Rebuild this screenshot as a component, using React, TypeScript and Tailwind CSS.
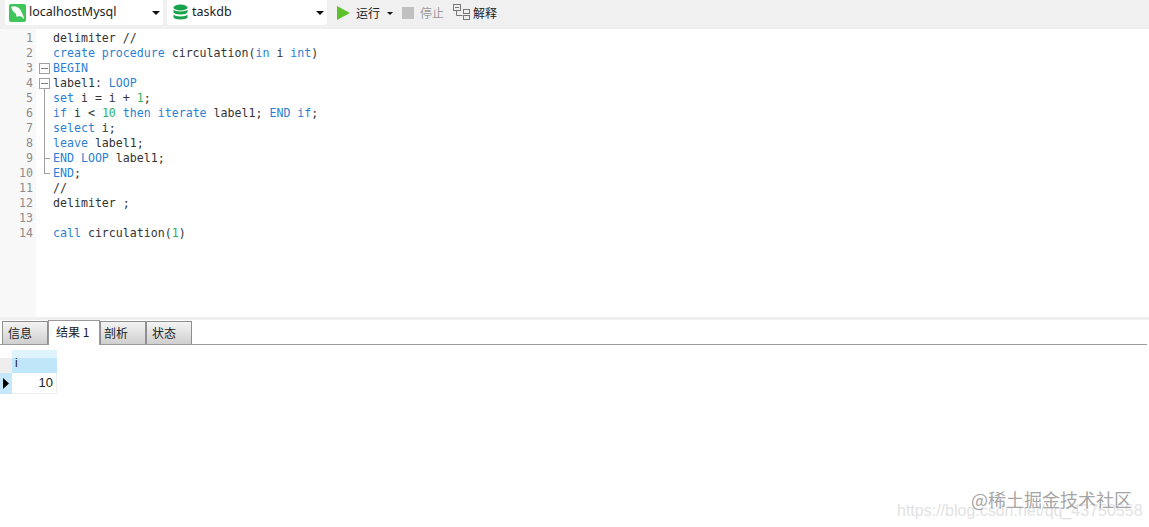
import React from 'react';

const mono = { fontFamily: '"DejaVu Sans Mono", monospace' };

type Tok = [string, 'k' | 'n' | 'p'];

const lines: Tok[][] = [
  [['delimiter //', 'p']],
  [['create procedure', 'k'], [' circulation(', 'p'], ['in', 'k'], [' i ', 'p'], ['int', 'k'], [')', 'p']],
  [['BEGIN', 'k']],
  [['label1: ', 'p'], ['LOOP', 'k']],
  [['set', 'k'], [' i = i + ', 'p'], ['1', 'n'], [';', 'p']],
  [['if', 'k'], [' i < ', 'p'], ['10', 'n'], [' ', 'p'], ['then iterate', 'k'], [' label1; ', 'p'], ['END if', 'k'], [';', 'p']],
  [['select', 'k'], [' i;', 'p']],
  [['leave', 'k'], [' label1;', 'p']],
  [['END LOOP', 'k'], [' label1;', 'p']],
  [['END', 'k'], [';', 'p']],
  [['//', 'p']],
  [['delimiter ;', 'p']],
  [],
  [['call', 'k'], [' circulation(', 'p'], ['1', 'n'], [')', 'p']],
];

const tokClass = { k: 'text-[#2b7fd4]', n: 'text-[#2fae5f]', p: 'text-[#333333]' };

function FoldMark({ line }: { line: number }) {
  if (line === 3 || line === 4) {
    return (
      <div className="relative w-[11px] h-[15px]">
        {line === 4 && <div className="absolute left-[5px] top-[12px] h-[3px] w-px bg-[#a0a0a0]" />}
        <div className="absolute left-0 top-[2px] w-[11px] h-[11px] border border-[#a0a0a0] bg-white flex items-center justify-center">
          <div className="w-[7px] h-px bg-[#808080]" />
        </div>
      </div>
    );
  }
  if (line >= 5 && line <= 10) {
    return (
      <div className="relative w-[11px] h-[15px]">
        <div className={`absolute left-[5px] top-0 w-px bg-[#a0a0a0] ${line === 10 ? 'h-[8px]' : 'h-[15px]'}`} />
        {line >= 9 && <div className="absolute left-[5px] top-[7px] w-[6px] h-px bg-[#a0a0a0]" />}
      </div>
    );
  }
  return null;
}

function Combo({ box, icon, label }: { box: string; icon: React.ReactNode; label: string }) {
  return (
    <div className={`${box} h-[25px] bg-white flex items-center pr-[3px] rounded-[2px]`}>
      <div className="w-[20px] h-[18px] flex items-center justify-center shrink-0">{icon}</div>
      <span className="ml-[2px] text-[12.5px] text-[#222222]" style={{ fontFamily: '"Noto Sans", sans-serif' }}>{label}</span>
      <svg className="ml-auto" width="8" height="4" viewBox="0 0 8 4"><path d="M0 0h8L4 4z" fill="#111" /></svg>
    </div>
  );
}

function Tab({ label, active, box }: { label: string; active?: boolean; box: string }) {
  if (active) {
    return (
      <div className={`${box} h-[25px] -mb-px relative z-10 bg-white border border-b-0 border-[#9a9a9a] flex items-center text-[12px] text-[#222222] pb-[3px]`}>
        {label}
      </div>
    );
  }
  return (
    <div className={`${box} h-[23px] bg-gradient-to-b from-[#f4f4f4] to-[#cfcfcf] border border-b-0 border-[#8f8f8f] flex items-center text-[12px] text-[#222222]`}>
      {label}
    </div>
  );
}

export default function App() {
  return (
    <div
      className="relative w-[1149px] h-[527px] overflow-hidden bg-white flex flex-col"
      style={{ fontFamily: '"Noto Sans CJK SC", "Noto Sans", sans-serif' }}
    >
      {/* Toolbar */}
      <div className="h-[29px] bg-[#f0f0f0] flex items-start pl-[5px] shrink-0">
        <Combo
          box="w-[158px] pl-[2px]"
          label="localhostMysql"
          icon={
            <svg width="17" height="18" viewBox="0 0 17 18">
              <rect width="17" height="18" rx="2" fill="#3fc65a" />
              <path d="M2 3c2-1 4-1 6 0 3 1 4 4 5 6 1 2 2 4 2 6-2-2-3-3-5-3-1 1-2 1-3 0 1-1 0-2-1-3-2-1-3-4-4-6z" fill="#fff" />
            </svg>
          }
        />
        <div className="ml-[4px]">
          <Combo
            box="w-[160px] pl-[3px]"
            label="taskdb"
            icon={
              <svg width="15" height="17" viewBox="0 0 15 17">
                <ellipse cx="7.5" cy="3.5" rx="7" ry="3" fill="#16a34a" />
                <path d="M0.5 5.5c1 2.500 13 2.500 14 0v3c-1 2.500-13 2.500-14 0z" fill="#16a34a" />
                <path d="M0.500 10.500c1 2.500 13 2.500 14 0v3c-1 2.500-13 2.500-14 0z" fill="#16a34a" />
              </svg>
            }
          />
        </div>
        <div className="flex items-center h-[26px] ml-[10px] text-[12px] text-[#222222]">
          <svg width="13" height="14" viewBox="0 0 13 14"><path d="M0 0l13 7-13 7z" fill="#5cc22c" /></svg>
          <span className="ml-[6px]">运行</span>
          <svg className="ml-[7px]" width="6" height="3" viewBox="0 0 6 3"><path d="M0 0h6L3 3z" fill="#111" /></svg>
          <div className="ml-[9px] w-[12px] h-[12px] bg-[#c0c0c0]" />
          <span className="ml-[6px] text-[#9a9a9a]">停止</span>
          <svg className="ml-[9px] mb-[3px]" width="17" height="16" viewBox="0 0 17 16" fill="none" stroke="#777" strokeWidth="1">
            <rect x="0.500" y="0.500" width="7" height="6" />
            <path d="M2 3.500h4" />
            <path d="M3.500 6.500v5h6" />
            <rect x="10.500" y="5.500" width="6" height="4" />
            <rect x="10.500" y="11.500" width="6" height="4" />
          </svg>
          <span className="ml-[3px]">解释</span>
        </div>
      </div>

      {/* Editor */}
      <div className="h-[288px] flex shrink-0 bg-white">
        <div className="w-[36px] bg-[#f8f8f8] pt-[2px] shrink-0">
          {lines.map((_, i) => (
            <div
              key={i}
              className="h-[15px] leading-[15px] text-right pr-[3px] text-[11.6px] text-[#8c8c8c]"
              style={mono}
            >
              {i + 1}
            </div>
          ))}
        </div>
        <div className="pt-[2px] pl-[3px] flex-1">
          {lines.map((toks, i) => (
            <div key={i} className="h-[15px] flex">
              <div className="w-[14px] shrink-0"><FoldMark line={i + 1} /></div>
              <pre className="leading-[15px] text-[11.6px]" style={mono}>
                {toks.map(([t, c], j) => (
                  <span key={j} className={tokClass[c]}>{t}</span>
                ))}
              </pre>
            </div>
          ))}
        </div>
      </div>

      {/* Splitter */}
      <div className="h-[3px] bg-[#f0f0f0] shrink-0" />

      {/* Result tabs */}
      <div className="h-[24px] mt-[1px] flex items-end pl-[2px] border-b border-[#9a9a9a] mr-[2px] shrink-0">
        <Tab label="信息" box="w-[46px] pl-[5px]" />
        <Tab label="结果 1" active box="w-[52px] pl-[7px]" />
        <Tab label="剖析" box="w-[46px] pl-[3px]" />
        <Tab label="状态" box="w-[46px] pl-[5px]" />
      </div>

      {/* Result grid */}
      <div className="mt-[5px] text-[12px] text-[#222222]" style={{ fontFamily: '"Liberation Sans", sans-serif' }}>
        <div className="flex h-[23px]">
          <div className="w-[12px] flex flex-col">
            <div className="h-[8px] bg-white" />
            <div className="h-[15px] bg-[#eeeeee]" />
          </div>
          <div className="w-[45px] flex flex-col">
            <div className="h-[8px] bg-[#dff3fc]" />
            <div className="h-[15px] bg-[#bfe6f9] pl-[3px] leading-[10px]">i</div>
          </div>
        </div>
        <div className="flex h-[21px]">
          <div className="w-[12px] bg-[#c4e8f9] flex items-center pl-[3px]">
            <svg width="6" height="11" viewBox="0 0 6 11"><path d="M0 0l6 5.500L0 11z" fill="#000" /></svg>
          </div>
          <div className="w-[45px] text-right pr-[3px] leading-[20px] text-[13px] border-b border-r border-[#eeeeee]">10</div>
        </div>
      </div>

      {/* Watermarks */}
      <div className="absolute left-[897px] top-[499px] text-[16px] text-[#e2e2e2] whitespace-nowrap" style={{ fontFamily: '"Liberation Sans", sans-serif' }}>
        https://blog.csdn.net/qq_43750558
      </div>
      <div className="absolute left-[971px] top-[487px] text-[18px] leading-[24px] text-[#a6a6a6] whitespace-nowrap">
        @稀土掘金技术社区
      </div>
    </div>
  );
}
